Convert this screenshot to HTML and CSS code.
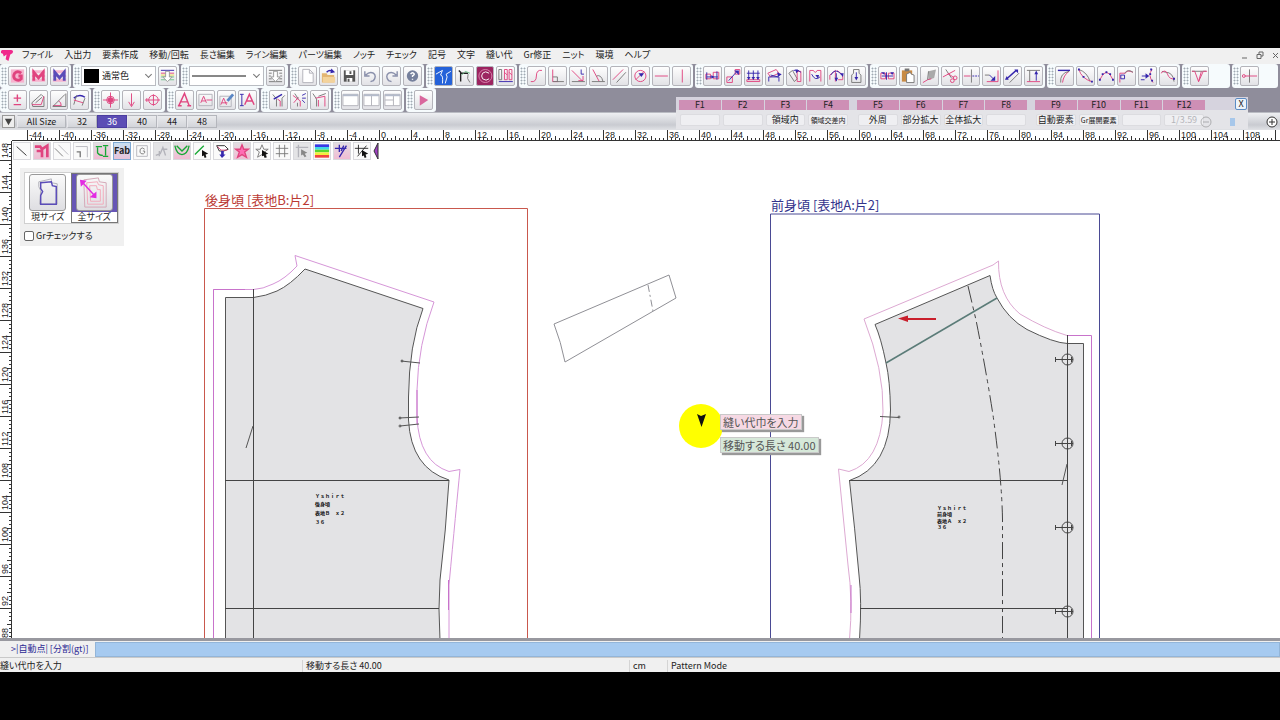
FILE: index.html
```html
<!DOCTYPE html>
<html lang="ja">
<head>
    <meta charset="UTF-8">
    <meta name="viewport" content="width=device-width, initial-scale=1.0">
    <title>Pattern Mode</title>
    <link rel="stylesheet" href="styles.css">
</head>
<body>

<div class="app">

  <header class="menubar">
    <svg class="logo" viewBox="0 0 14 14"><path d="M1 1h10q2 0 2 2t-3 3l-2 7-3-2 1-5-3 2-1-3-3-1z"/></svg>
    <nav class="menu">
      <a href="#">ファイル</a>
      <a href="#">入出力</a>
      <a href="#">要素作成</a>
      <a href="#">移動/回転</a>
      <a href="#">長さ編集</a>
      <a href="#">ライン編集</a>
      <a href="#">パーツ編集</a>
      <a href="#">ノッチ</a>
      <a href="#">チェック</a>
      <a href="#">記号</a>
      <a href="#">文字</a>
      <a href="#">縫い代</a>
      <a href="#">Gr修正</a>
      <a href="#">ニット</a>
      <a href="#">環境</a>
      <a href="#">ヘルプ</a>
    </nav>
    <div class="win">
      <button aria-label="最小化"><svg viewBox="0 0 10 10"><path d="M2 8h5"/></svg></button>
      <button aria-label="元に戻す"><svg viewBox="0 0 10 10"><path d="M2 4.500h4v4h-4zM4 4v-2h4v4h-2"/></svg></button>
      <button aria-label="閉じる"><svg viewBox="0 0 10 10"><path d="M3 3l5 5M8 3l-5 5"/></svg></button>
    </div>
  </header>

  <!-- toolbar 1 -->
  <div class="tools row1">
    <div class="group">
      <button class="tool"><svg viewBox="0 0 18 18"><path class="pf soft" d="M2 2h14v14h-14z"/><path class="p bold" d="M13 6q-4-3-7 0-2 3 0 6 4 3 7 0v-3h-3"/></svg></button>
      <button class="tool"><svg viewBox="0 0 18 18"><path class="pf soft" d="M2 3h14v3h-14zM2 8h14v2h-14zM2 12h14v3h-14z"/><path class="p bold" d="M4 14v-9l5 6 5-6v9"/></svg></button>
      <button class="tool"><svg viewBox="0 0 18 18"><path class="pf soft" d="M2 3h14v3h-14zM2 8h14v2h-14zM2 12h14v3h-14z"/><path class="v bold pale" d="M4 14v-9l5 6 5-6v9"/></svg></button>
    </div>
    <div class="group">
      <div class="combo"><span class="swatch"></span><select aria-label="色"><option>通常色</option></select></div>
      <button class="tool"><svg viewBox="0 0 18 18"><path class="v" d="M2 3h14"/><path class="p" d="M2 6h14"/><path class="gr" d="M2 10h14M2 13h14"/><path class="y" d="M2 8h14"/><path class="wh" d="M7 4h4v6h3l-5 5-5-5h3z"/></svg></button>
    </div>
    <div class="group">
      <div class="combo"><svg class="lineprev" viewBox="0 0 54 4"><path d="M0 2h54"/></svg><select aria-label="線種"><option></option></select></div>
      <button class="tool"><svg viewBox="0 0 18 18"><path class="g" d="M2 3h14M2 6h3M7 6h4M13 6h3M2 9h2M14 9h2M2 12h3M13 12h3M2 15h14"/><path class="wh" d="M7 4h4v6h3l-5 5-5-5h3z"/></svg></button>
    </div>
    <div class="group">
      <button class="tool"><svg viewBox="0 0 18 18"><path class="g lt" fill="#fff" d="M4 2h7l4 4v10h-11zM11 2v4h4"/></svg></button>
      <button class="tool"><svg viewBox="0 0 18 18"><path fill="#e3b573" d="M2 6h5l1 2h7v8h-13z"/><path fill="#f3d39c" d="M3 10h13v6h-13z"/><path class="v bold2" d="M7 5q3-3 6-1"/><path class="vf" d="M12 1l4 4-5 1z"/></svg></button>
      <button class="tool"><svg viewBox="0 0 18 18"><path fill="#555" d="M3 3h12v12h-12z"/><path fill="#fff" d="M5 3h8v5h-8zM6 11h6v4h-6z"/><path fill="#555" d="M9 4h2v3h-2zM7 12h2v3h-2z"/></svg></button>
      <button class="tool"><svg viewBox="0 0 18 18"><path class="sl bold2" d="M3 4v5h5M4 8q4-4 8-2 4 3 0 8l-3 1"/></svg></button>
      <button class="tool"><svg viewBox="0 0 18 18"><path class="sl bold2" d="M15 4v5h-5M14 8q-4-4-8-2-4 3 0 8l3 1"/></svg></button>
      <button class="tool"><svg viewBox="0 0 18 18"><circle cx="9" cy="9" r="6" fill="#75809c"/><path stroke="#fff" class="bold2" d="M7 7q2-3 4 0 0 1-2 2v1M9 12v1"/></svg></button>
    </div>
    <div class="group">
      <button class="tool on"><svg viewBox="0 0 18 18"><path stroke="#fff" d="M1 7l7-4-2 5q3 0 2 9M17 4l-5 3 1 3-2 7"/></svg></button>
      <button class="tool"><svg viewBox="0 0 18 18"><path class="k bold2" d="M3 3l2 2v10M5 6h8"/><path class="gr" d="M6 8l4-4 5 2"/><path class="g" d="M13 7q-2 5 2 9"/></svg></button>
      <button class="tool wine"><svg viewBox="0 0 18 18"><circle cx="9" cy="9" r="7" stroke="#dc86b1"/><path stroke="#fff" d="M13 6q-4-3-7 0-2 3 0 6 4 3 7 0"/></svg></button>
      <button class="tool"><svg viewBox="0 0 18 18"><path class="g" d="M2 2h3v11h-3z"/><path class="p" d="M8 2h3v11h-3zM13 2h3v11h-3zM8 5l3 3M13 5l3 3"/><path class="v" d="M2 15h15"/></svg></button>
    </div>
    <div class="group">
      <button class="tool"><svg viewBox="0 0 18 18"><path class="p" d="M3 15q6 1 6-6t6-6"/></svg></button>
      <button class="tool"><svg viewBox="0 0 18 18"><path class="p" d="M4 2v13h6"/><path class="g" d="M4 15h12M4 10h5v5"/></svg></button>
      <button class="tool"><svg viewBox="0 0 18 18"><path class="p" d="M2 3l12 12M9 14h5v-5"/><path class="g" d="M2 15h14"/><path class="v" d="M12 2v5h3"/></svg></button>
      <button class="tool"><svg viewBox="0 0 18 18"><path class="p" d="M3 2l7 13"/><path class="g" d="M2 15h14M7 9q5-2 7 6"/></svg></button>
      <button class="tool"><svg viewBox="0 0 18 18"><path class="p" d="M2 13l11-11"/><path class="g" d="M6 16l10-11"/></svg></button>
      <button class="tool"><svg viewBox="0 0 18 18"><circle class="p" cx="9" cy="9" r="6"/><path class="p" d="M4 13l9-9"/><path class="vf" d="M7 6h6l-3 4z"/></svg></button>
      <button class="tool"><svg viewBox="0 0 18 18"><path class="p" d="M2 9h14"/></svg></button>
      <button class="tool"><svg viewBox="0 0 18 18"><path class="p" d="M10 2v14"/></svg></button>
    </div>
    <div class="group">
      <button class="tool"><svg viewBox="0 0 18 18"><path class="p" d="M2 7h5v5h-5zM10 5h6v7h-6z"/><path class="v" d="M3 10h12M3 5v8M14 4v9"/><path class="vf" d="M8 8l3 2-3 2z"/></svg></button>
      <button class="tool"><svg viewBox="0 0 18 18"><path class="p" d="M2 10h6v6h-6zM11 2h5v5h-5z"/><path class="v" d="M4 14l9-10"/><path class="vf" d="M10 3h5v5z"/></svg></button>
      <button class="tool"><svg viewBox="0 0 18 18"><path class="p" d="M2 13h14v2h-14z"/><path class="v" d="M2 6h14M4 3v10M9 3v10M14 3v10"/><path class="vf" d="M7 10h4l-2 3zM2 10h4l-2 3zM12 10h4l-2 3z"/></svg></button>
      <button class="tool"><svg viewBox="0 0 18 18"><path class="p" d="M2 6l9-4 3 4-9 4z"/><path class="v" d="M3 15v-5h11v5M5 8l8 2"/><path class="vf" d="M12 5l5 2-4 3z"/></svg></button>
      <button class="tool"><svg viewBox="0 0 18 18"><path class="g" d="M2 6l4-3 5 9-3 3z"/><path class="p" d="M11 4h4v11h-4z"/><path class="v" d="M7 3q5-2 8 2"/><path class="vf" d="M9 2l4 1-3 3z"/></svg></button>
      <button class="tool"><svg viewBox="0 0 18 18"><path class="p" d="M3 15v-12h4q2 4 4 0h4v12"/><path class="v" d="M5 7q4 8 9 3"/><path class="vf" d="M9 8l4 0-1 4z"/></svg></button>
      <button class="tool"><svg viewBox="0 0 18 18"><path class="p" d="M2 13v-5l6-5v12M10 3l6 5v5h-5"/><path class="v" d="M3 8q5-9 12 0M9 6v8"/><path class="vf" d="M7 11h4l-2 4zM13 6h4l-1 4z"/></svg></button>
      <button class="tool"><svg viewBox="0 0 18 18"><path class="g" d="M6 2h6v4l2 2v8h-10v-8l2-2z"/><path class="v" d="M9 5v7"/><path class="vf" d="M7 10h4l-2 4z"/></svg></button>
    </div>
    <div class="group">
      <button class="tool"><svg viewBox="0 0 18 18"><path class="p" d="M2 6h5v6h-5zM10 6h6v6h-6z"/><path class="v" d="M3 9h12M8 5v8"/><path class="vf" d="M2 5h4v3zM12 5h4l-2 3z"/></svg></button>
      <button class="tool"><svg viewBox="0 0 18 18"><path fill="#c88b45" d="M2 3h11v12h-11z"/><path fill="#777" d="M5 1h5v3h-5z"/><path fill="#fff" class="g" d="M7 7l4-2 1 2 3 1v8h-8z"/></svg></button>
      <button class="tool"><svg viewBox="0 0 18 18"><path fill="#aaa" d="M8 4l8-2-2 9-6 2z"/><path class="p" d="M2 16l5-3 4-1"/><path class="g" d="M8 4l-1 9"/></svg></button>
      <button class="tool"><svg viewBox="0 0 18 18"><path class="g" d="M4 2l6 9"/><path class="p" d="M1 10l13-7M6 6l7 5"/><circle class="p" cx="14" cy="11" r="2"/><circle class="p" cx="11" cy="14" r="2"/></svg></button>
      <button class="tool"><svg viewBox="0 0 18 18"><path class="p" d="M1 9h7"/><path class="g" d="M9 2v14"/><path class="v" stroke-dasharray="2 1" d="M10 9h7"/></svg></button>
      <button class="tool"><svg viewBox="0 0 18 18"><path class="p" d="M4 15h12v-12"/><path class="g" d="M2 8h5"/><path class="v" d="M7 8l5 5"/><path class="vf" d="M13 9v5h-5z"/></svg></button>
      <button class="tool"><svg viewBox="0 0 18 18"><path class="v bold2" d="M3 12l10-9"/><path class="g" d="M6 16l10-10"/><path class="vf" d="M1 13l2-4 2 4zM11 2h4v4z"/></svg></button>
      <button class="tool"><svg viewBox="0 0 18 18"><path class="g" d="M2 3h14M5 3v12"/><path class="p" d="M2 15h14"/><path class="v" d="M12 5v9"/><path class="vf" d="M10 7l2-4 2 4z"/></svg></button>
    </div>
    <div class="group">
      <button class="tool"><svg viewBox="0 0 18 18"><path class="v bold2" d="M2 3h13"/><path class="p" d="M14 4q-6 4-7 12"/><path class="g" d="M14 4q-10 2-9 12"/></svg></button>
      <button class="tool"><svg viewBox="0 0 18 18"><path class="g" d="M2 2q9 3 12 13"/><path class="p" d="M2 2q3 10 14 13"/><path class="vf" d="M1 1h2v2h-2zM6 9h2v2h-2zM15 14h2v2h-2z"/></svg></button>
      <button class="tool"><svg viewBox="0 0 18 18"><path class="p" d="M2 13q7-16 14 0"/><path class="vf" d="M1 12h2v2h-2zM4 6h2v2h-2zM8 4h2v2h-2zM12 6h2v2h-2zM15 12h2v2h-2z"/></svg></button>
      <button class="tool"><svg viewBox="0 0 18 18"><path class="p" d="M2 16v-10h6q1-4 8-1"/><path class="g" d="M7 6q4-5 9-1"/><path class="v" d="M3 8h4v4h-4z"/></svg></button>
      <button class="tool"><svg viewBox="0 0 18 18"><path class="p" d="M14 2q-5 6 1 14"/><path class="v" d="M3 9h6M2 13h4"/><path class="vf" d="M7 6l4 3-4 3zM12 1h2v2h-2zM11 6h2v2h-2zM13 13h2v2h-2z"/></svg></button>
      <button class="tool"><svg viewBox="0 0 18 18"><path class="g" d="M2 4l4 1q8 0 9 10"/><path class="p" d="M1 6q5-5 7 1t8 5"/><path class="vf" d="M14 11h2v2h-2z"/></svg></button>
    </div>
    <div class="group">
      <button class="tool"><svg viewBox="0 0 18 18"><path class="g" d="M1 4h15"/><path class="p" d="M1 4h3l4 11 3-11M8 15l5-11h4"/></svg></button>
    </div>
    <div class="group">
      <button class="tool"><svg viewBox="0 0 18 18"><path class="g" d="M9 2v14"/><path class="p" d="M4 9h13"/><circle class="p" cx="3" cy="9" r="1.500"/></svg></button>
    </div>
  </div>

  <!-- toolbar 2 -->
  <div class="tools row2">
    <div class="group">
      <button class="tool"><svg viewBox="0 0 18 18"><path class="p bold2" d="M5 7h8M9 3v8M5 14h8"/></svg></button>
      <button class="tool"><svg viewBox="0 0 18 18"><path class="g" d="M2 12l10-9 3 3v10h-12zM6 12l7-6"/><path class="p" d="M2 14h10l3-9"/></svg></button>
      <button class="tool"><svg viewBox="0 0 18 18"><path class="p" d="M2 15h9q0-4-3-5"/><path class="g" d="M16 2v14h-14l13-13"/></svg></button>
      <button class="tool"><svg viewBox="0 0 18 18"><path class="v bold2" d="M3 7q6-5 12-1"/><path class="g" d="M6 4l-3 10M15 7l-3 8"/><path class="p" d="M3 9l10 3"/></svg></button>
    </div>
    <div class="group">
      <button class="tool"><svg viewBox="0 0 18 18"><path class="p" d="M9 1v16M1 9h16"/><circle class="p" cx="9" cy="9" r="4"/><circle class="pf" cx="9" cy="9" r="3"/></svg></button>
      <button class="tool"><svg viewBox="0 0 18 18"><path class="p" d="M9 2v13M6 11l3 5 3-5"/></svg></button>
      <button class="tool"><svg viewBox="0 0 18 18"><path class="p" d="M1 9h16M10 3v12M3 7v4"/><circle class="p" cx="10" cy="9" r="5"/></svg></button>
    </div>
    <div class="group">
      <button class="tool"><svg viewBox="0 0 18 18"><path class="p bold2" d="M3 15l6-13 5 13M5 11h7M2 15h4M12 15h4"/></svg></button>
      <button class="tool"><svg viewBox="0 0 18 18"><path class="g lt" d="M2 3h14v12h-14z"/><path class="p" d="M4 12l3-7 3 7M5 10h4M10 9h6"/></svg></button>
      <button class="tool"><svg viewBox="0 0 18 18"><path class="g lt" d="M2 5h12v11h-12z"/><path class="p" d="M3 14l3-7 3 7M4 12h6"/><path class="bl bold" d="M10 10l6-7"/></svg></button>
      <button class="tool"><svg viewBox="0 0 18 18"><path class="v" d="M3 3v12M1 3h4M1 15h4"/><path class="p bold2" d="M6 14l5-11 5 11M8 10h6"/></svg></button>
    </div>
    <div class="group">
      <button class="tool"><svg viewBox="0 0 18 18"><path class="g" d="M3 3l4 5v8M13 16v-9l3-3"/><path class="v bold2" d="M4 8l9-5"/><path class="p" d="M8 8l3 2v6"/></svg></button>
      <button class="tool"><svg viewBox="0 0 18 18"><path class="p" d="M2 4l8 6v6M8 6l-5 6"/><path class="g" d="M4 2l4 6M7 12v4"/><path class="v" d="M12 4l4-2M12 7h4M12 9l3 3"/></svg></button>
      <button class="tool"><svg viewBox="0 0 18 18"><path class="g" d="M2 2l4 6v8M8 5l8-3"/><path class="p" d="M5 7l10-2v11M8 9v7"/></svg></button>
    </div>
    <div class="group">
      <button class="tool"><svg viewBox="0 0 18 18"><path class="g lt" fill="#fff" d="M1 3h16v12h-16z"/><path fill="#b4bbcb" d="M1 3h16v2h-16z"/></svg></button>
      <button class="tool"><svg viewBox="0 0 18 18"><path class="g lt" fill="#fff" d="M1 3h16v12h-16zM9 3v12"/><path fill="#b4bbcb" d="M1 3h16v2h-16z"/></svg></button>
      <button class="tool"><svg viewBox="0 0 18 18"><path class="g lt" fill="#fff" d="M1 3h16v12h-16zM10 3v12M1 9h9"/><path fill="#b4bbcb" d="M1 3h16v2h-16z"/></svg></button>
    </div>
    <div class="group">
      <button class="tool"><svg viewBox="0 0 18 18"><path fill="#d9679d" d="M5 4l9 5-9 6z"/></svg></button>
    </div>
  </div>

  <!-- size tabs -->
  <div class="sizes">
    <button class="drop" aria-label="サイズ一覧"><svg viewBox="0 0 12 12"><path d="M2 3h8l-4 7z"/></svg></button>
    <button class="all">All Size</button>
    <button>32</button>
    <button class="current">36</button>
    <button>40</button>
    <button>44</button>
    <button>48</button>
    <div class="zoombar">
      <button class="minus" aria-label="縮小"><svg viewBox="0 0 12 12"><circle cx="6" cy="6" r="5"/><path d="M3 6h6"/></svg></button>
      <input type="range" min="0" max="100" value="36" aria-label="倍率">
      <button class="plus" aria-label="拡大"><svg viewBox="0 0 12 12"><circle cx="6" cy="6" r="5"/><path d="M3 6h6M6 3v6"/></svg></button>
    </div>
  </div>

  <!-- function keys -->
  <aside class="fkeys">
    <div class="fset">
      <span>F1</span><span>F2</span><span>F3</span><span>F4</span>
      <button></button><button></button><button>領域内</button><button class="tiny">領域交差内</button>
    </div>
    <div class="fset">
      <span>F5</span><span>F6</span><span>F7</span><span>F8</span>
      <button>外周</button><button>部分拡大</button><button>全体拡大</button><button></button>
    </div>
    <div class="fset">
      <span>F9</span><span>F10</span><span>F11</span><span>F12</span>
      <button>自動要素</button><button class="tiny">Gr展開要素</button><button></button><button class="faint">1/3.59</button>
    </div>
    <button class="close" aria-label="閉じる">X</button>
  </aside>

  <svg class="ruler top" id="rulerX"></svg>

  <main class="work">
    <svg class="ruler left" id="rulerY"></svg>

    <section class="canvas">
      <svg class="drawing">
        <g transform="translate(-12 -141)">

          <!-- back body -->
          <path class="frame red" d="M204.500 640V208.500H527.500V640"/>
          <text class="name redtext" x="205" y="205">後身頃 [表地B:片2]</text>
          <path class="body" d="M225.500 640V297.500H253.500Q266 296 277 291Q290 285 305 269L423 308.500Q409 345 408.500 397V420Q411 468 449 480Q446 530 440 580Q438 608 440 640"/>
          <path class="seam" d="M213.500 640V289.500H253.500Q263 289 273 284Q285 279 297 266L295 255.500L434 302Q418 345 417 390V417Q419 462 449 471.500L460 469.500Q456 510 449 585V640"/>
          <path class="seam deep" d="M213.500 640V289.500H245M417 390V424M448.500 580V610"/>
          <path class="ln" d="M253.500 289V640M225 480.500H449M225 608.500H439"/>
          <path class="ln thin" d="M253 426L246 448M401 361L420 363M399 418L419 417M400 426L419 424"/>
          <circle class="ln thin" cx="402" cy="361" r="1"/>
          <circle class="ln thin" cx="400" cy="418" r="1"/>
          <circle class="ln thin" cx="400" cy="426" r="1"/>
          <text class="note" x="315" y="498">Ｙｓｈｉｒｔ</text>
          <text class="note" x="315" y="506">後身頃</text>
          <text class="note" x="315" y="515">表地Ｂ　ｘ２</text>
          <text class="note" x="315" y="524">３６</text>

          <!-- yoke strip -->
          <path class="strip" d="M554 324L669 275L676 298L565 362Q561 342 554 324Z"/>
          <path class="strip" stroke-dasharray="7 3 2 3" d="M648 285L653 311"/>

          <!-- front body -->
          <path class="frame blue" d="M770.500 640V214H1099.500V640"/>
          <text class="name bluetext" x="771" y="210">前身頃 [表地A:片2]</text>
          <path class="body" d="M990 275.500Q992 290 997 298Q1008 319 1027 329.500Q1054 343 1067.500 343.500H1083.500V640H859.500Q862 600 859 575Q855 530 849.500 480.500Q890 467 890.500 410Q890 380 886 363Q881 338 875 324.500Z"/>
          <path class="seam pale" d="M1067 335.500Q1045 329 1020 314Q998 296 998.500 261L993 265L864 319Q884 370 883 412Q880 462 849 471.500L838.500 469L848 565Q853 600 849.500 640"/>
          <path class="seam deep" d="M1067 335.500H1091.500V640M851 585V613"/>
          <path class="ln" d="M1067.500 335V640M849 480.500H1067M860 608.500H1067"/>
          <path class="teal" d="M886 363L997 298"/>
          <path class="ln" stroke-dasharray="17 4 4 4 4 4" d="M968 286L976 320Q986 370 993 415Q1002 480 1002.500 520V638"/>
          <path class="ln thin" d="M1067 464L1062 485M880 416.500L899 417.500"/>
          <circle class="ln thin" cx="899" cy="417" r="1"/>
          <path class="ln" d="M1055 359.500H1073M1055.500 357v5M1071.500 357v5M1055 443.500H1073M1055.500 441v5M1071.500 441v5M1055 527.500H1073M1055.500 525v5M1071.500 525v5M1055 611.500H1073M1055.500 609v5M1071.500 609v5"/>
          <circle class="ln" cx="1067.500" cy="359.500" r="5.500"/>
          <circle class="ln" cx="1067.500" cy="443.500" r="5.500"/>
          <circle class="ln" cx="1067.500" cy="527.500" r="5.500"/>
          <circle class="ln" cx="1067.500" cy="611.500" r="5.500"/>
          <path class="arrow" d="M906 319H936"/>
          <path fill="#c91f2c" d="M898 318.500L908 315.500V322Z"/>
          <text class="note" x="937" y="510">Ｙｓｈｉｒｔ</text>
          <text class="note" x="937" y="516">前身頃</text>
          <text class="note" x="937" y="523">表地Ａ　ｘ２</text>
          <text class="note" x="937" y="529">３６</text>

          <!-- pointer -->
          <circle cx="701" cy="426" r="22" fill="#ffff00"/>
          <path fill="#111" d="M697 414l4 2 5-2-4.500 13z"/>
        </g>
      </svg>

      <div class="quick">
        <button><svg viewBox="0 0 18 18"><path class="k" d="M3 4l11 10"/></svg></button>
        <button class="pk"><svg viewBox="0 0 18 18"><path class="p bold" d="M1 4h6l2 3 6-4v13M3 9h6v7"/></svg></button>
        <button><svg viewBox="0 0 18 18"><path class="g lt" d="M5 2l11 11"/><path class="g" d="M1 6l9 9"/></svg></button>
        <button><svg viewBox="0 0 18 18"><path class="g lt" d="M2 4h13v12"/><path class="g bold2" d="M3 10h4v6"/></svg></button>
        <button class="pk"><svg viewBox="0 0 18 18"><path class="gn bold2" d="M2 4h7M10 3h6M13 4v10M10 15h6M4 5v6q2 3 6 3"/></svg></button>
        <button class="bb">Fab</button>
        <button><svg viewBox="0 0 18 18"><path class="g lt" d="M3 3h12v12h-12z"/><path class="g" d="M12 7q-3-3-5 0-1 4 1 5 3 1 4-1v-2h-2"/></svg></button>
        <button class="off"><svg viewBox="0 0 18 18"><path class="g lt bold2" d="M2 14l5-2 3-7 3 9M9 7h6M6 9v6"/></svg></button>
        <button class="pk"><svg viewBox="0 0 18 18"><path class="gn bold2" d="M1 3q2 10 8 10t8-10M3 3l6 6 6-6"/></svg></button>
        <button><svg viewBox="0 0 18 18"><path class="gn bold2" d="M1 13l10-10"/><path fill="#111" d="M9 8l7 4-3 1 1 3-2 1-1-3-2 1z"/></svg></button>
        <button><svg viewBox="0 0 18 18"><path class="k" fill="#fff" d="M3 3h9l4 4-5 2h-5z"/><path class="p" d="M4 4l4 4h7"/><path class="vf" d="M8 9h3v4h2l-4 4-3-4h2z"/></svg></button>
        <button class="pk"><svg viewBox="0 0 18 18"><path class="p bold2" fill="#ff6cb4" d="M9 2l2 5h5l-4 3 2 6-5-3-5 3 2-6-4-3h5z"/></svg></button>
        <button><svg viewBox="0 0 18 18"><path class="g" d="M9 2l2 5h5l-4 3 2 6-5-3-5 3 2-6-4-3h5z"/><path fill="#111" d="M9 8l7 4-3 1 1 3-2 1-1-3-2 1z"/></svg></button>
        <button><svg viewBox="0 0 18 18"><path class="g" d="M6 2v14M12 2v14M2 6h14M2 12h14"/></svg></button>
        <button class="off"><svg viewBox="0 0 18 18"><path class="g lt bold2" d="M5 2v14M2 5h14"/><path fill="#888" d="M8 7l7 4-3 1 2 3-2 1-2-3-2 1z"/></svg></button>
        <button><svg viewBox="0 0 18 18"><path stroke="#3939e6" class="bold" d="M1 3h16"/><path stroke="#41d9e3" class="bold" d="M1 6h16"/><path stroke="#59d62f" class="bold" d="M1 9h16"/><path stroke="#f3ee3c" class="bold" d="M1 12h16"/><path stroke="#f2453d" class="bold" d="M1 15h16"/></svg></button>
        <button class="pk"><svg viewBox="0 0 18 18"><path class="v bold2" d="M1 6h13M6 2v8M14 3l-8 13M8 9l3-6"/></svg></button>
        <button><svg viewBox="0 0 18 18"><path class="k" d="M1 6h15M5 2v10M14 3l-10 12"/><path fill="#111" d="M9 8l7 4-3 1 1 3-2 1-1-3-2 1z"/></svg></button>
        <svg class="fold" viewBox="0 0 6 18"><path d="M5 1v16l-4-8z"/></svg>
      </div>

      <div class="panel">
        <div class="modes">
          <button class="mode">
            <span class="thumb"><svg viewBox="0 0 36 36"><path class="g lt" d="M9 7l13-3v4l6 1v21h-18l1-14-2-4z"/><path class="v bold2 pale" d="M11 8l11-1 1 4 4 1v18h-16v-9l2-4-2-3z"/></svg></span>
            現サイズ
          </button>
          <button class="mode sel">
            <span class="thumb"><svg viewBox="0 0 36 36"><path stroke="#d4a8b8" d="M7 5l15-2 1 4 7 1v25h-22z"/><path stroke="#f3a9bb" d="M10 8l11-1 1 3 5 1v19h-16zM13 11h7l1 4h3v12h-10z"/><path stroke="#e22be2" class="bold2" d="M6 8l12 13"/><path fill="#e22be2" d="M3 5l7 1-6 6zM20 24v-7l-7 6z"/></svg></span>
            全サイズ
          </button>
        </div>
        <label class="check"><input type="checkbox">Grチェックする</label>
      </div>

      <div class="tip first">縫い代巾を入力</div>
      <div class="tip second">移動する長さ 40.00</div>
    </section>
  </main>

  <div class="command">
    <label for="cmd">&gt;|自動点| [分割(gt)]</label>
    <input type="text" id="cmd">
  </div>

  <footer class="status">
    <span>縫い代巾を入力</span>
    <span>移動する長さ 40.00</span>
    <span>cm</span>
    <span>Pattern Mode</span>
  </footer>

</div>

<script>

const d = document,
rulerX = d.getElementById("rulerX"),
rulerY = d.getElementById("rulerY"),
step = 32;

function drawRulers(){

  const width = d.querySelector(".app").clientWidth,
  height = d.querySelector(".work").clientHeight;

  // horizontal ruler, 0 sits at 380px, 4cm per step
  let marks = "", labels = "";

  for(let x = 28; x < width; x += 4){
    let h = 3;
    if((x - 28) % 16 == 0) h = 5;
    if((x - 28) % step == 0){
      h = 11;
      if(x < width - 20) labels += `<text x="${x + 1}" y="8">${(x - 380) / 8}</text>`;
    }
    marks += `M${x - 0.5} 11v-${h}`;
  }
  rulerX.innerHTML = `<path d="${marks}M12 10.5H${width}"/>${labels}`;

  // vertical ruler, 148 sits 19px under the top
  marks = "";
  labels = "";

  for(let y = 3; y < height + 4; y += 4){
    let w = 3;
    if((y - 19) % 16 == 0) w = 5;
    if((y - 19) % step == 0){
      w = 12;
      labels += `<text transform="translate(8 ${y - 2}) rotate(-90)">${148 - (y - 19) / 8}</text>`;
    }
    marks += `M12 ${y + 0.5}h-${w}`;
  }
  rulerY.innerHTML = `<path d="${marks}M11.5 0V${height}"/>${labels}`;
}

drawRulers();
window.addEventListener("resize", drawRulers);

</script>
</body>
</html>
```
FILE: styles.css
```css
*{
  box-sizing: border-box;
}

body{
  margin: 0;
  background-color: #000;
  font-family: "Noto Sans CJK JP", sans-serif;
  font-feature-settings: "palt";
  font-size: 9px;
  line-height: 12px;
  color: #222;
}

button, input, select{
  font: inherit;
  font-feature-settings: inherit;
  color: inherit;
  margin: 0;
  padding: 0;
  border: 0;
  background: none;
}

svg{
  display: block;
  fill: none;
}

.app{
  position: relative;
  display: flex;
  flex-direction: column;
  height: 100vh;
  padding: 48px 0;
  overflow: hidden;
}

/* icon strokes */
.p{ stroke: #e0447f; }
.v{ stroke: #3526ad; }
.v.pale{ stroke: #5a4cb8; }
.g{ stroke: #777; }
.k{ stroke: #222; }
.y{ stroke: #e6d94a; }
.gr{ stroke: #6cc488; }
.gn{ stroke: #16a834; }
.sl{ stroke: #8a90ab; }
.bl{ stroke: #5b87c5; }
.lt{ stroke: #b3b3ba; }
.pf{ fill: #e0447f; }
.vf{ fill: #3526ad; }
.wh{ fill: #fff; stroke: #999; }
.soft{ fill: #f6b4cf; }
.bold{ stroke-width: 3; }
.bold2{ stroke-width: 1.5; }

/* menu */
.menubar{
  flex: none;
  display: flex;
  align-items: center;
  height: 16px;
  padding-bottom: 2px;
  background-color: #f0f0f0;
}

.logo{
  width: 13px;
  height: 13px;
  margin: 0 8px 0 1px;
  fill: #f0288b;
}

.menu{
  display: flex;
  gap: 11px;
}

.menu a{
  color: #222;
  text-decoration: none;
  white-space: nowrap;
}

.win{
  display: flex;
  gap: 5px;
  margin-left: auto;
}

.win svg{
  width: 10px;
  height: 10px;
  stroke: #666;
}

/* toolbars */
.tools{
  flex: none;
  display: grid;
  height: 24px;
  background-color: #8f8d9b;
}

.row1{
  grid-template-columns: 73px 108px 109px 136px 93px 176px 175px 177px 135px 50px 1fr;
}

.row2{
  grid-template-columns: 93px 74px 94px 72px 73px 32px;
}

.group{
  position: relative;
  display: flex;
  align-items: center;
  gap: 2px;
  margin-right: 2px;
  padding: 0 2px 0 8px;
  border-radius: 3px;
  background-color: #f6fbfd;
}

/* dotted grip */
.group::before{
  content: "";
  position: absolute;
  top: 3px;
  bottom: 3px;
  left: 1px;
  width: 6px;
  background: radial-gradient(circle, #a0aab3 30%, transparent 60%) 0 0 / 3px 3px;
}

.tool{
  flex: 1 1 0;
  min-width: 0;
  max-width: 19px;
  height: 20px;
  border: 1px solid #b4b4ba;
  border-radius: 2px;
  background: linear-gradient(#fefefe, #e2e2e6);
}

.tool svg{
  width: 100%;
  height: 18px;
}

.tool.on{
  background: #2462d9;
}

.tool.wine{
  background: #9c2460;
}

.combo{
  flex: none;
  display: flex;
  align-items: center;
  width: 75px;
  height: 20px;
  padding-left: 2px;
  border: 1px solid #b9bcc2;
  background-color: #fff;
}

.swatch{
  width: 15px;
  height: 14px;
  background-color: #000;
}

.combo select{
  flex: 1;
  appearance: none;
  height: 18px;
  padding-left: 3px;
}

.combo::after{
  content: "";
  width: 4px;
  height: 4px;
  margin: 0 4px 3px 0;
  border: solid #777;
  border-width: 0 1px 1px 0;
  transform: rotate(45deg);
}

.lineprev{
  flex: none;
  width: 54px;
  height: 4px;
  stroke: #111;
  stroke-width: 1;
}

/* sizes */
.sizes{
  flex: none;
  display: flex;
  align-items: center;
  height: 18px;
  border-top: 1px solid #b9bbc2;
  background: linear-gradient(#eeeff2, #c9cbd1 70%, #e1e2e6);
  padding-left: 2px;
}

.sizes > button{
  width: 30px;
  height: 13px;
  border: 1px solid #b4b6bc;
  border-left-color: #e8e8ec;
  background: linear-gradient(#e9eaed, #d3d5da);
}

.sizes > .drop{
  width: 13px;
  margin-right: 2px;
  border-color: #999;
  background: #eee;
}

.drop svg{
  width: 11px;
  height: 11px;
  fill: #444;
}

.sizes > .all{
  width: 49px;
  margin-right: 1px;
}

.sizes > .current{
  border-color: #4b3ea0;
  background: #5b4db5;
  color: #fff;
}

.zoombar{
  display: flex;
  align-items: center;
  gap: 3px;
  margin-left: auto;
  margin-right: 2px;
  z-index: 2;
}

.zoombar svg{
  width: 12px;
  height: 12px;
  stroke: #333;
}

.zoombar .minus{
  opacity: 0.3;
}

.zoombar .plus svg{
  fill: #fff;
}

.zoombar input{
  appearance: none;
  width: 48px;
  height: 10px;
}

.zoombar input::-webkit-slider-thumb{
  appearance: none;
  width: 5px;
  height: 8px;
  background-color: #a7c7ea;
}

/* function key bar floats over the toolbars */
.fkeys{
  position: absolute;
  top: 97px;
  right: 32px;
  display: flex;
  gap: 8px;
  width: 572px;
  height: 32px;
  padding: 3px;
  background: linear-gradient(#d6d3de 13px, #e4e4e8 13px);
}

.fset{
  display: grid;
  grid-template-columns: repeat(4, 1fr);
  gap: 4px 1px;
  width: 170px;
}

.fset span{
  height: 10px;
  line-height: 10px;
  text-align: center;
  background-color: #ce8fb5;
}

.fset button{
  height: 12px;
  line-height: 10px;
  margin: 0 1px;
  border: 1px solid #dcdce0;
  border-radius: 2px;
  background-color: #efeff2;
  white-space: nowrap;
}

.fset .tiny{
  font-size: 7px;
}

.fset .faint{
  color: #b5b5ba;
}

.close{
  position: absolute;
  top: 1px;
  right: 1px;
  width: 12px;
  height: 12px;
  line-height: 10px;
  border: 1px solid #5b8cc4;
  border-radius: 2px;
  background-color: #eef3f9;
}

/* rulers */
.ruler{
  background-color: #fff;
  overflow: hidden;
  font-family: "Liberation Sans", sans-serif;
  font-size: 9px;
}

.ruler path{
  stroke: #333;
}

.ruler text{
  fill: #222;
}

.ruler.top{
  flex: none;
  width: 100%;
  height: 11px;
}

.ruler.left{
  flex: none;
  width: 12px;
  height: 100%;
}

/* work area */
.work{
  flex: 1;
  min-height: 0;
  display: flex;
  background-color: #fff;
}

.canvas{
  position: relative;
  flex: 1;
  min-width: 0;
  overflow: hidden;
}

.drawing{
  position: absolute;
  inset: 0;
  width: 100%;
  height: 100%;
}

.frame.red{ stroke: #c9584d; }
.frame.blue{ stroke: #4a4a94; }

.name{
  font-size: 13px;
}

.redtext{ fill: #bb3a34; }
.bluetext{ fill: #34348c; }

.body{
  fill: #e3e3e5;
  stroke: #555;
}

.seam{ stroke: #d696d8; }
.seam.pale{ stroke: #dda9d2; }
.seam.deep{ stroke: #c873cb; }
.ln{ stroke: #444; }
.ln.thin{ stroke: #555; }
.strip{ stroke: #909096; }
.teal{ stroke: #5b7c78; stroke-width: 1.5; }
.arrow{ stroke: #c91f2c; stroke-width: 2; }

.note{
  font-size: 5px;
  font-weight: 700;
  font-feature-settings: normal;
  fill: #111;
}

.quick{
  position: relative;
  display: flex;
  gap: 2px;
  width: 370px;
  height: 19px;
  padding: 1px;
}

.quick button{
  flex: none;
  width: 18px;
  height: 18px;
  border: 1px solid #d9d9dd;
  background-color: #fafafa;
}

.quick button svg{
  width: 16px;
  height: 16px;
}

.quick .pk{
  background: linear-gradient(#e4dde2, #f0bcd3);
}

.quick .bb{
  border-color: #7fa9d3;
  background: linear-gradient(#c8dff2, #e9c3d9);
  font-weight: 700;
  font-size: 9px;
}

.quick .off{
  background-color: #e4e4e6;
}

.fold{
  width: 6px;
  height: 18px;
  fill: #9d3fc0;
  stroke: #333;
}

.panel{
  position: relative;
  width: 104px;
  margin: 8px 0 0 8px;
  padding: 4px;
  background-color: #f0f0f0;
}

.modes{
  display: flex;
  width: 95px;
  background-color: #fff;
  border: 1px solid #d0d0d0;
}

.mode{
  flex: 1;
  height: 50px;
  text-align: center;
  font-size: 9px;
  line-height: 12px;
}

.mode.sel{
  border: 1px solid #777;
  background: linear-gradient(#6655b5 38px, #fff 38px);
}

.thumb{
  display: block;
  width: 37px;
  height: 37px;
  margin: 0 auto;
  border: 1px solid #999;
  border-radius: 3px;
  background: linear-gradient(#fafafa, #dedee2);
}

.thumb svg{
  width: 35px;
  height: 35px;
}

.check{
  display: flex;
  align-items: center;
  gap: 2px;
  margin-top: 6px;
}

.check input{
  appearance: none;
  width: 10px;
  height: 10px;
  border: 1px solid #666;
  border-radius: 2px;
  background-color: #fff;
}

.tip{
  position: absolute;
  left: 708px;
  height: 16px;
  padding: 0 2px;
  border: 1px solid #c9c9c9;
  box-shadow: 2px 2px 1px #999;
  font-size: 11px;
  line-height: 14px;
  color: #555;
  white-space: nowrap;
}

.first{
  top: 273px;
  background-color: #f6d9e4;
}

.second{
  top: 296px;
  background-color: #d6e8d9;
}

/* bottom */
.command{
  flex: none;
  display: flex;
  height: 20px;
  border-top: 3px solid #98989f;
  border-bottom: 1px solid #c9c9c9;
  background-color: #f0f0f0;
}

.command label{
  width: 95px;
  padding-left: 11px;
  line-height: 15px;
  color: #2c2894;
  white-space: nowrap;
}

.command input{
  flex: 1;
  margin-top: 1px;
  border: 1px solid #93b5d8;
  background-color: #a6caf0;
}

.status{
  flex: none;
  display: grid;
  grid-template-columns: 302px 327px 38px 1fr;
  height: 14px;
  padding-top: 2px;
  line-height: 12px;
  background-color: #f0f0f0;
}

.status span + span{
  padding-left: 3px;
  border-left: 1px solid #d4d4d4;
}
```
